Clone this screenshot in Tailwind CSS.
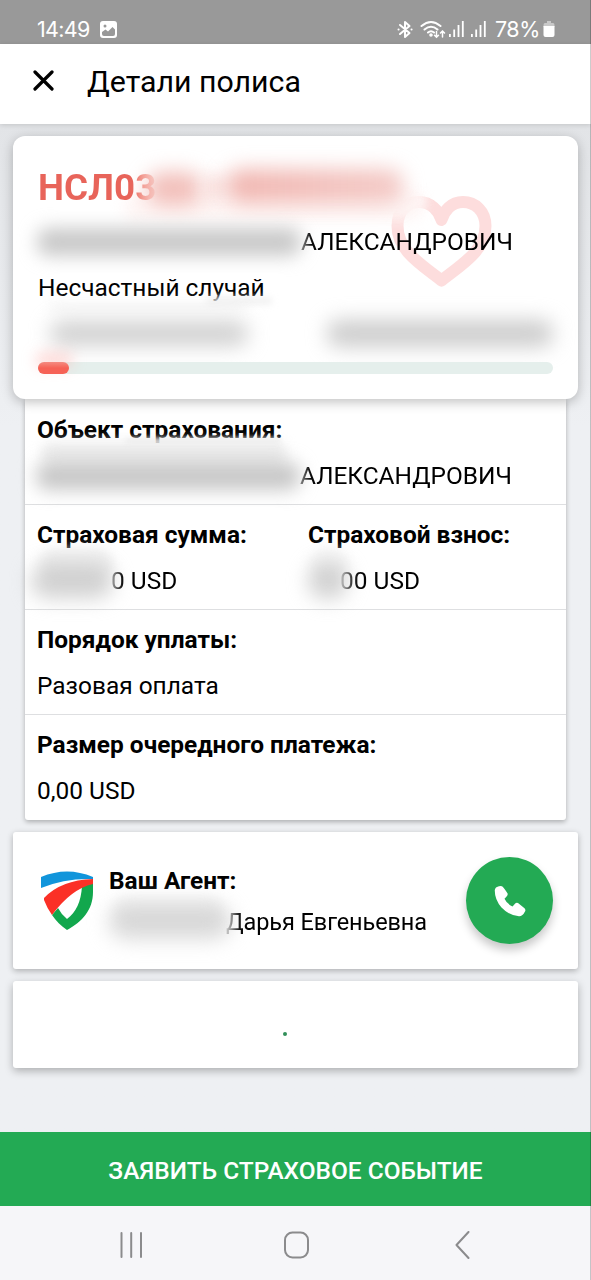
<!DOCTYPE html>
<html lang="ru">
<head>
<meta charset="utf-8">
<title>Детали полиса</title>
<script src="https://cdn.jsdelivr.net/npm/@tailwindcss/browser@4"></script>
</head>
<body class="relative w-[591px] h-[1280px] overflow-hidden flex flex-col bg-[#eef0f3] font-[Roboto,sans-serif] text-[24.450px] leading-[46px] text-black whitespace-nowrap">
  <!-- Status bar -->
  <div class="h-11 shrink-0 bg-[#999] text-white flex items-center pt-[14px] pl-[37px] pr-9 font-[Inter,sans-serif] text-[21.500px] leading-7">
    <span class="w-[53px] tracking-[-0.7px]">14:49</span>
    <svg class="ml-[10px] w-[17px] h-[17px]" viewBox="0 0 17 17"><rect width="17" height="17" rx="3" fill="#fff"/><path d="M2 13V11L5.500 8.500L8 10.500L12.500 6L15 8.500V13Q15 15 13 15H4Q2 15 2 13Z" fill="#999"/><circle cx="5" cy="5" r="1.500" fill="#999"/></svg>
    <div class="ml-auto flex items-center">
      <svg class="w-4 h-[19px]" viewBox="0 0 16 19" fill="none" stroke="#fff" stroke-width="2" stroke-linejoin="round" stroke-linecap="round"><path d="M3 5L12.500 13L8 17V2L12.500 6L3 14"/><path d="M1.500 9.500h.1M14.500 9.500h.1"/></svg>
      <svg class="ml-[7px] w-[26px] h-[19px]" viewBox="0 0 26 19" fill="none" stroke="#fff" stroke-width="2" stroke-linecap="round"><path d="M1.500 6Q11 -2 20.500 6M4.500 9.500Q11 4 17.500 9.500M8 12.500Q11 10 14 12.500"/><circle cx="11" cy="15" r=".8" fill="#fff"/><path d="M16.500 11.500V17M14.500 15.300L16.500 17.300L18.500 15.300M22.500 17V11.500M20.500 13L22.500 11L24.500 13" stroke-width="1.500"/></svg>
      <svg class="ml-[3px] w-4 h-[18px]" viewBox="0 0 16 18" fill="#fff"><rect y="14" width="1.800" height="3"/><rect x="4.300" y="9.500" width="1.800" height="7.500"/><rect x="8.600" y="5" width="1.800" height="12"/><rect x="12.900" y="1" width="1.800" height="16"/></svg>
      <svg class="ml-[6px] w-4 h-[18px]" viewBox="0 0 16 18" fill="#fff"><rect y="14" width="1.800" height="3"/><rect x="4.300" y="9.500" width="1.800" height="7.500"/><rect x="8.600" y="5" width="1.800" height="12"/><rect x="12.900" y="1" width="1.800" height="16"/></svg>
      <span class="ml-[8px] w-[45px] tracking-[-0.5px]">78%</span>
      <svg class="ml-[3px] w-[12px] h-[18px]" viewBox="0 0 12 18"><path d="M4 1H8V3H10Q11.500 3 11.500 5V7H.5V5Q.5 3 2 3H4Z" fill="#c8c8c8"/><path d="M.5 6H11.500V15Q11.500 17 9.500 17H2.500Q.5 17 .5 15Z" fill="#fff"/></svg>
    </div>
  </div>

  <!-- App bar -->
  <header class="relative z-10 h-20 shrink-0 bg-white shadow-[0_1px_5px_rgba(0,0,0,.14)] flex items-center pl-[33px]">
    <svg class="w-[21px] h-[21px] -mt-[7px]" viewBox="0 0 21 21" fill="none" stroke="#000" stroke-width="3.200" stroke-linecap="round"><path d="M2 2L19 19M19 2L2 19"/></svg>
    <h1 class="ml-[33px] -mt-[5px] text-[30.300px]">Детали полиса</h1>
  </header>

  <main class="flex flex-col grow bg-linear-to-b from-[#e2e4e7] to-[#eef0f3] to-30%">
    <!-- Policy summary -->
    <section class="relative z-[5] mt-3 mx-[13px] h-[263px] shrink-0 rounded-xl bg-white shadow-[0_3px_12px_rgba(0,0,0,.25)] px-[25px] pt-[28px]">
      <svg class="absolute left-[377px] top-[59px] w-[103px] h-[94px]" viewBox="0 0 103 94" fill="none" stroke="#fddddd" stroke-width="12" stroke-linecap="round" stroke-linejoin="round"><path d="M51.500 85.500C29 68 7.500 55 7.500 31C7.500 15 18 7 29 7C41 7 49 16 51.500 25C54 16 61 7 73 7C85 7 95.500 16 95.500 31C95.500 55 74 68 51.500 85.500Z"/></svg>
      <div class="absolute left-[372px] top-[54px] w-[42px] h-[20px] bg-[#fffafa]/80 blur-[5px] rounded-full"></div>
      <div class="absolute left-[110px] top-[60px] w-[300px] h-6 bg-[#fef6f5] blur-[7px] rounded-full"></div>
      <div class="relative flex h-12 items-center text-[36.800px] font-bold">
        <span class="w-[118px] text-transparent bg-clip-text bg-linear-to-r from-[#e8645a] from-80% to-[#fbe0dd]">НСЛ03</span>
        <div class="w-[56px] h-[33px] -ml-[10px] bg-[#eda49d]/70 blur-[10px] rounded-full"></div>
        <div class="w-[24px] h-[24px] bg-[#f8d8d5]/70 blur-[8px]"></div>
        <div class="w-[178px] h-[34px] -mt-1 bg-linear-to-r from-[#eda49d]/80 to-[#efb4af]/70 blur-[10px] rounded-2xl"></div>
      </div>
      <div class="relative mt-[7px] flex h-[46px] items-center">
        <div class="w-[264px] h-[28px] -ml-[1px] bg-[#bcbcbc]/80 blur-[9px] rounded-xl"></div>
        <span class="bg-clip-text text-transparent bg-linear-to-r from-[#777] to-black to-6%">АЛЕКСАНДРОВИЧ</span>
      </div>
      <div class="relative h-[46px]"><span>Несчастный случай</span>
        <div class="absolute left-[168px] top-[32px] w-[66px] h-[8px] bg-[#efefef]/80 blur-[3px] rounded-full"></div>
        <div class="absolute left-[10px] top-[38px] w-[200px] h-[7px] bg-[#f1f1f1]/80 blur-[6px] rounded-full"></div>
      </div>
      <div class="flex h-[46px] items-center justify-between pl-3 -mt-[1px]">
        <div class="w-[198px] h-[25px] bg-[#c6c6c6]/80 blur-[10px] rounded-xl"></div>
        <div class="w-[226px] h-[27px] bg-[#c0c0c0]/80 blur-[10px] rounded-xl"></div>
      </div>
      <div class="relative mt-[6px] h-3 rounded-full bg-[#e5efec]">
        <div class="absolute -top-[10px] -left-[3px] w-[38px] h-4 bg-[#ffaaa4]/40 blur-[7px] rounded-full"></div>
        <div class="relative w-[31px] h-3 rounded-full bg-linear-to-b from-[#f48b81] to-[#f66256] to-50%"></div>
      </div>
    </section>

    <!-- Insurance details -->
    <section class="relative ml-[25px] mr-[25px] h-[421px] shrink-0 bg-white rounded-b-[3px] shadow-[0_2px_5px_rgba(0,0,0,.28)] divide-y divide-[#dedfe1]">
      <div class="relative h-[106px] pl-3 pt-2">
        <div class="font-bold">Объект страхования:</div>
        <div class="absolute left-[16px] top-[43px] w-[246px] h-[22px] bg-[#ebebeb]/90 blur-[6px] rounded-full"></div>
        <div class="absolute left-[100px] top-[39px] w-[156px] h-[7px] bg-[#eee]/80 blur-[2px] rounded-full"></div>
        <div class="relative flex items-center h-[46px]">
          <div class="w-[264px] h-[28px] -ml-[1px] bg-[#b9b9b9]/80 blur-[9px] rounded-xl"></div>
          <span class="bg-clip-text text-transparent bg-linear-to-r from-[#777] to-black to-6%">АЛЕКСАНДРОВИЧ</span>
        </div>
      </div>
      <div class="relative h-[105px] pl-3 pt-[7px] grid grid-cols-[271px_1fr]">
        <div class="relative">
          <div class="font-bold">Страховая сумма:</div>
          <div class="absolute left-[2px] top-[37px] w-[74px] h-[30px] bg-[#eaeaea]/80 blur-[6px] rounded-full"></div>
          <div class="relative flex items-center h-[46px]"><div class="w-[82px] h-[33px] -ml-[6px] bg-[#c6c6c6]/80 blur-[10px] rounded-full"></div><span class="-ml-[2px] bg-clip-text text-transparent bg-linear-to-r from-[#999] to-black to-20%">0 USD</span></div>
        </div>
        <div class="relative">
          <div class="font-bold">Страховой взнос:</div>
          <div class="absolute left-[2px] top-[37px] w-[38px] h-[30px] bg-[#f1f1f1]/80 blur-[6px] rounded-full"></div>
          <div class="relative flex items-center h-[46px]"><div class="w-[40px] h-[36px] bg-[#c6c6c6]/80 blur-[10px] rounded-full"></div><span class="-ml-[8px] bg-clip-text text-transparent bg-linear-to-r from-[#bbb] to-black to-20%">00 USD</span></div>
        </div>
      </div>
      <div class="h-[105px] pl-3 pt-[7px]">
        <div class="font-bold">Порядок уплаты:</div>
        <div>Разовая оплата</div>
      </div>
      <div class="h-[105px] pl-3 pt-[7px]">
        <div class="font-bold">Размер очередного платежа:</div>
        <div>0,00 USD</div>
      </div>
    </section>

    <!-- Agent -->
    <section class="mt-3 mx-[13px] h-[137px] shrink-0 flex items-center bg-white rounded-[3px] shadow-[0_2px_6px_rgba(0,0,0,.28)] pl-[27px] pr-[25px]">
      <svg class="w-[54px] h-[60px]" viewBox="0 0 54 60"><path d="M1 6Q27 -5 53 6V8Q25 7 1 17Z" fill="#1195db"/><path d="M53 9V21C53 39 42 51 27 59C21 55 16 50 12 44L18 37Q21 43 27 48C36 41 41 31 42 15Z" fill="#12a74d"/><path d="M4 27Q21 9 53 8V13Q31 18 12 44Q7 37 4 29Z" fill="#fb3026"/></svg>
      <div class="relative ml-[15px] pt-[2px] grow">
        <div class="font-bold leading-[40px]">Ваш Агент:</div>
        <div class="absolute left-[4px] top-[38px] w-[110px] h-[26px] bg-[#f0f0f0]/80 blur-[6px] rounded-full"></div>
        <div class="relative flex items-center h-[41px]"><div class="w-[122px] h-[34px] bg-[#cfcfcf]/80 blur-[10px] rounded-full"></div><span class="-ml-[5px] text-[23.500px] tracking-[-0.100px] bg-clip-text text-transparent bg-linear-to-r from-[#ccc] to-black to-8%">Дарья Евгеньевна</span></div>
      </div>
      <button class="flex items-center justify-center w-[87px] h-[87px] shrink-0 rounded-full bg-[#23aa54] shadow-[0_6px_10px_rgba(0,0,0,.22)]">
        <svg class="w-[32px] h-[32px]" viewBox="0 0 32 32" fill="#fff"><path d="M2 2.500Q5 .2 8 1.200Q9.500 2 13.600 8.500Q14 10 12.800 11.200L10.500 13.700Q13 19 18.500 21.500L21 18.800Q22 17.500 24 18L30.500 23.300Q32 24.800 31 26.500Q28.500 31.500 25 31.300Q15 30.500 7.500 22.500Q.5 14.500 .8 5Q1 3.500 2 2.500Z"/></svg>
      </button>
    </section>

    <!-- Loading card -->
    <section class="mt-3 mx-[13px] h-[87px] shrink-0 flex items-center justify-center bg-white rounded-[3px] shadow-[0_3px_8px_rgba(0,0,0,.28)] pr-[21px] pt-[19px]">
      <div class="w-1 h-1 rounded-full bg-[#318f59]"></div>
    </section>
  </main>

  <button class="h-[74px] shrink-0 bg-[#23aa54] text-white font-medium flex items-center justify-center pt-[3px]">ЗАЯВИТЬ СТРАХОВОЕ СОБЫТИЕ</button>

  <!-- System navigation -->
  <nav class="h-[74px] shrink-0 bg-[#f6f6f9] flex items-center pl-[119px] pt-[3px]">
    <svg class="w-6 h-[26px]" viewBox="0 0 24 26" stroke="#8b8b8d" stroke-width="2" stroke-linecap="round"><path d="M2.500 1V25M12.200 1V25M22 1V25"/></svg>
    <svg class="ml-[140px] w-[27px] h-[28px]" viewBox="0 0 27 28" fill="none" stroke="#8b8b8d" stroke-width="2"><rect x="2" y="1.500" width="23" height="25" rx="7.500"/></svg>
    <svg class="ml-[145px] w-[15px] h-[28px]" viewBox="0 0 15 28" fill="none" stroke="#8b8b8d" stroke-width="2" stroke-linecap="round" stroke-linejoin="round"><path d="M13.500 1L1.500 14L13.500 27"/></svg>
  </nav>
  <div class="absolute z-20 right-0 top-0 w-px h-full bg-black/20"></div>
</body>
</html>
